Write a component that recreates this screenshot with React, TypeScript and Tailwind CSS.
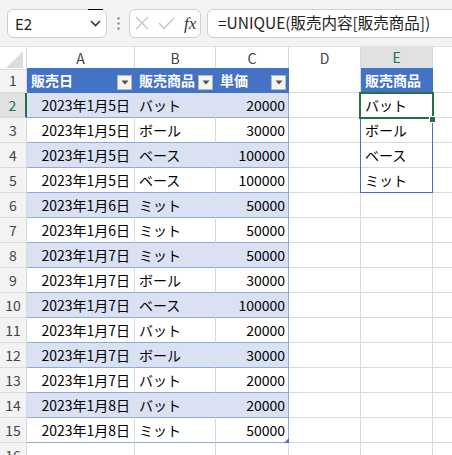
import React from "react";

const rows: [string, string, string][] = [
  ["2023年1月5日", "バット", "20000"],
  ["2023年1月5日", "ボール", "30000"],
  ["2023年1月5日", "ベース", "100000"],
  ["2023年1月5日", "ベース", "100000"],
  ["2023年1月6日", "ミット", "50000"],
  ["2023年1月6日", "ミット", "50000"],
  ["2023年1月7日", "ミット", "50000"],
  ["2023年1月7日", "ボール", "30000"],
  ["2023年1月7日", "ベース", "100000"],
  ["2023年1月7日", "バット", "20000"],
  ["2023年1月7日", "ボール", "30000"],
  ["2023年1月7日", "バット", "20000"],
  ["2023年1月8日", "バット", "20000"],
  ["2023年1月8日", "ミット", "50000"],
];

const eVals = ["バット", "ボール", "ベース", "ミット"];

const GRID = "grid grid-cols-[27px_108px_81px_73px_72px_72px_1fr]";

function DropBtn() {
  return (
    <div className="absolute right-[2px] bottom-[2px] w-[15px] h-[15px] bg-[#f4f4f4] border border-[#b8b8b8] flex items-center justify-center">
      <svg width="8" height="5" viewBox="0 0 8 5">
        <path d="M0.5 0.5 L7.5 0.5 L4 4.5 Z" fill="#505050" />
      </svg>
    </div>
  );
}

export default function App() {
  return (
    <div
      className="w-[452px] h-[455px] overflow-hidden bg-white relative"
      style={{ fontFamily: '"Noto Sans CJK JP", "Noto Sans", sans-serif' }}
    >
      {/* Toolbar */}
      <div className="h-[47px] bg-[#f3f3f3] border-b border-[#e1e1e1] flex items-center pl-[7px] overflow-hidden">
        <div className="relative w-[100px] h-[29px] bg-white border border-[#cfcfcf] rounded-[6px] flex items-center justify-between pl-[7px] pr-[5px] shrink-0">
          <span className="text-[15px] text-[#222] leading-none">E2</span>
          <svg width="11" height="7" viewBox="0 0 11 7">
            <path d="M1 1 L5.5 5.5 L10 1" fill="none" stroke="#333" strokeWidth="1.6" />
          </svg>
          <div className="absolute top-[-1px] right-[3px] w-[15px] h-[1px] bg-black" />
        </div>
        <div className="w-[22px] flex items-center justify-center shrink-0">
          <svg width="3" height="13" viewBox="0 0 3 13">
            <circle cx="1.5" cy="1.5" r="1.2" fill="#8a8a8a" />
            <circle cx="1.5" cy="6.5" r="1.2" fill="#8a8a8a" />
            <circle cx="1.5" cy="11.5" r="1.2" fill="#8a8a8a" />
          </svg>
        </div>
        <div className="w-[72px] h-[29px] bg-white border border-[#cfcfcf] rounded-[6px] flex items-center pl-[4px] shrink-0">
          <svg width="14" height="14" viewBox="0 0 14 14" className="ml-[1px]">
            <path d="M1 1 L13 13 M13 1 L1 13" stroke="#c4c4c4" strokeWidth="1.3" />
          </svg>
          <svg width="17" height="13" viewBox="0 0 17 13" className="ml-[9px]">
            <path d="M1 6 L6 11.5 L16 1" fill="none" stroke="#c4c4c4" strokeWidth="1.3" />
          </svg>
          <span
            className="ml-[9px] text-[17px] italic text-[#333] leading-none"
            style={{ fontFamily: '"Liberation Serif", serif' }}
          >
            fx
          </span>
        </div>
        <div className="ml-[6px] w-[270px] h-[29px] bg-white border border-[#cfcfcf] rounded-[6px] flex items-center pl-[10px] shrink-0">
          <span className="text-[15.5px] text-[#222] leading-none whitespace-nowrap">
            =UNIQUE(販売内容[販売商品])
          </span>
        </div>
      </div>

      {/* Grid */}
      <div className="relative">
        {/* column header row */}
        <div className={`${GRID} h-[21px] text-[14px] text-[#444]`}>
          <div className="relative bg-white border-r border-b border-[#dadada]">
            <svg width="17" height="17" viewBox="0 0 17 17" className="absolute right-[3px] bottom-[1px]">
              <path d="M17 0 L17 17 L0 17 Z" fill="#dcdcdc" />
            </svg>
          </div>
          {["A", "B", "C", "D"].map((c) => (
            <div key={c} className="bg-white border-r border-b border-[#dadada] flex items-center justify-center">
              {c}
            </div>
          ))}
          <div className="bg-[#e1e1e1] border-r border-[#dadada] border-b-2 border-b-[#217346] flex items-center justify-center text-[#217346]">
            E
          </div>
          <div className="bg-white border-b border-[#dadada]" />
        </div>

        {/* row 1 */}
        <div className={`${GRID} h-[25px] text-[14px]`}>
          <div className="bg-[#f3f3f3] border-r border-b border-[#dadada] flex items-center justify-center pt-[1px] text-[#444]">
            1
          </div>
          {["販売日", "販売商品", "単価"].map((h) => (
            <div
              key={h}
              className="relative bg-[#4472c4] border-r border-b border-[#4472c4] flex items-center pl-[4px] pt-[1px] text-white font-bold whitespace-nowrap overflow-hidden"
            >
              {h}
              <DropBtn />
            </div>
          ))}
          <div className="bg-white border-r border-b border-[#dadada]" />
          <div className="bg-[#4472c4] border-r border-b border-[#4472c4] flex items-center pl-[4px] pt-[1px] text-white font-bold whitespace-nowrap">
            販売商品
          </div>
          <div className="bg-white border-b border-[#dadada]" />
        </div>

        {/* data rows */}
        {rows.map((r, i) => {
          const rowNo = i + 2;
          const band = rowNo % 2 === 0;
          const fill = band ? "bg-[#d9e1f2]" : "bg-white";
          const innerR = band ? "border-r-[#d9e1f2]" : "border-r-[#dadada]";
          const sel = rowNo === 2;
          return (
            <div key={rowNo} className={`${GRID} h-[25px] text-[14px] text-black`}>
              <div
                className={`border-b border-[#dadada] flex items-center justify-center pt-[1px] ${
                  sel
                    ? "bg-[#e1e1e1] text-[#217346] border-r-2 border-r-[#217346]"
                    : "bg-[#f3f3f3] text-[#444] border-r border-r-[#dadada]"
                }`}
              >
                {rowNo}
              </div>
              <div className={`${fill} border-r ${innerR} border-b border-b-[#8ea9db] flex items-center justify-end pr-[4px] pt-[1px] whitespace-nowrap`}>
                {r[0]}
              </div>
              <div className={`${fill} border-r ${innerR} border-b border-b-[#8ea9db] flex items-center pl-[4px] pt-[1px] whitespace-nowrap`}>
                {r[1]}
              </div>
              <div className={`relative ${fill} border-r border-r-[#8ea9db] border-b border-b-[#8ea9db] flex items-center justify-end pr-[3px] pt-[1px]`}>
                {r[2]}
                {rowNo === 15 && (
                  <svg width="5" height="5" viewBox="0 0 5 5" className="absolute right-[-1px] bottom-[-1px]">
                    <path d="M5 0 L5 5 L0 5 Z" fill="#4472c4" />
                  </svg>
                )}
              </div>
              <div className="bg-white border-r border-b border-[#dadada]" />
              <div className="bg-white border-r border-b border-[#dadada] flex items-center pl-[4px] pt-[1px] whitespace-nowrap">
                {rowNo <= 5 ? eVals[rowNo - 2] : ""}
              </div>
              <div className="bg-white border-b border-[#dadada]" />
            </div>
          );
        })}

        {/* row 16 */}
        <div className={`${GRID} h-[25px] text-[14px]`}>
          <div className="bg-[#f3f3f3] border-r border-b border-[#dadada] flex items-center justify-center pt-[1px] text-[#444]">
            16
          </div>
          <div className="border-r border-b border-[#dadada]" />
          <div className="border-r border-b border-[#dadada]" />
          <div className="border-r border-b border-[#dadada]" />
          <div className="border-r border-b border-[#dadada]" />
          <div className="border-r border-b border-[#dadada]" />
          <div className="border-b border-[#dadada]" />
        </div>

        {/* spill range border E2:E5 */}
        <div className="absolute left-[360px] top-[46px] w-[73px] h-[100px] border border-[#4472c4] pointer-events-none" />
        {/* selection E2 */}
        <div className="absolute left-[359px] top-[45px] w-[75px] h-[27px] border-2 border-[#217346] pointer-events-none" />
        {/* fill handle */}
        <div className="absolute left-[429px] top-[69px] w-[7px] h-[7px] bg-[#217346] border border-white pointer-events-none" />
      </div>
    </div>
  );
}
